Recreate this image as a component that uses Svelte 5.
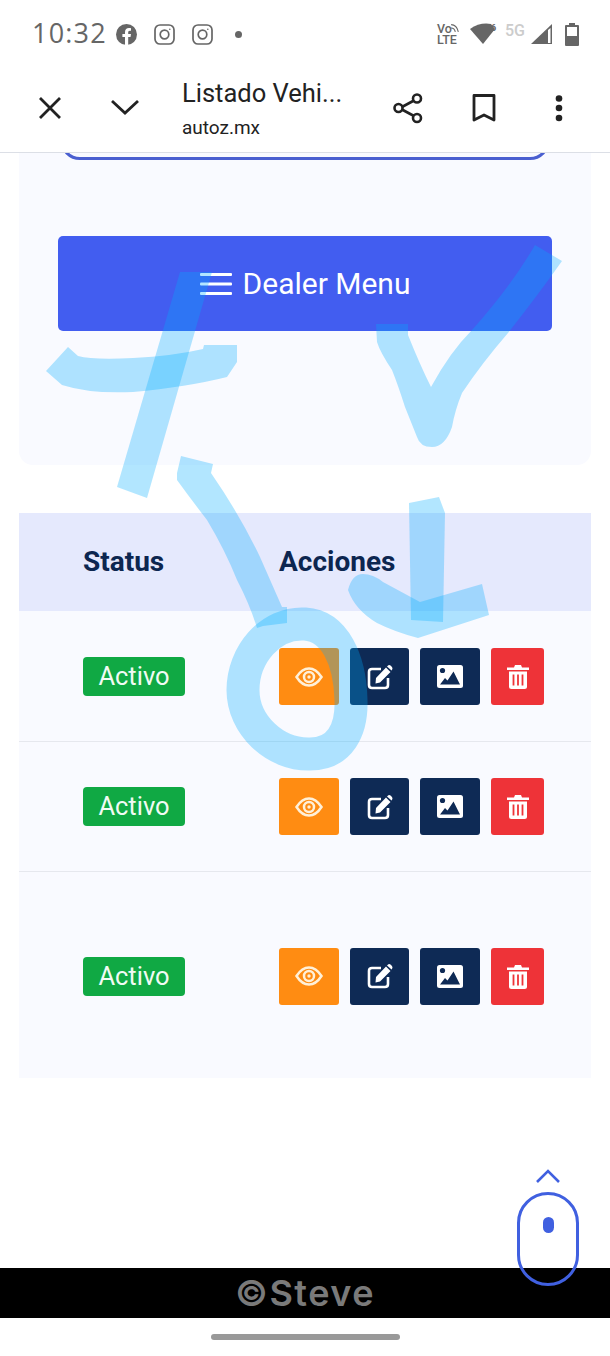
<script lang="ts">
  // Vehicle list as seen inside the in-app browser, with the hand-drawn marks on top
  const rows = [{ tall: false }, { tall: false }, { tall: true }]

  const strokes = [
    'M68 347 L78 356 Q93 360 133 358 Q173 356 203 349 L204 345 L237 345 L237 362 L227 377 Q187 387 133 392 Q90 394 62 385 L46 371 Z',
    'M180 272 L212 272 L147 498 L117 487 Z',
    'M376 324 L408 324 L408 335 Q420 365 431 387 Q450 352 472 330 Q512 285 535 245 L562 261 Q538 295 508 333 Q482 363 462 393 Q455 410 452 427 Q445 447 432 447 Q420 447 417 437 L405 407 Q398 385 392 370 Q380 352 377 342 Z',
    'M181 456 L213 464 L211 473 Q240 515 260 557 L282 607 L287 607 L287 623 L263 626 L257 628 Q250 605 237 580 Q225 550 207 520 Q190 498 177 480 L177 473 Z',
    'M409 503 L439 497 L445 513 L443 622 L411 620 Z',
    'M348 590 Q352 574 363 574 Q373 574 383 582 L420 602 L482 584 L489 615 L418 638 Q395 632 377 623 Q355 610 348 590 Z',
  ]
</script>

<div class="page">
  <div class="status-bar">
    <span class="time">10:32</span>
    <svg class="st-fb" width="21" height="21" viewBox="0 0 21 21">
      <circle cx="10.5" cy="10.5" r="10.5" fill="#666" />
      <path d="M9 21v-8H6.4v-3H9V8c0-2.700 1.600-4 4-4 1 0 2 .2 2 .2v2.500h-1.200c-1.200 0-1.600.8-1.600 1.500V10h2.800l-.5 3h-2.300v8z" fill="#fff" />
    </svg>
    <svg class="st-ig" width="21" height="21" viewBox="0 0 21 21" fill="none" stroke="#666" stroke-width="1.700">
      <rect x="1" y="1" width="19" height="19" rx="5" />
      <circle cx="10.500" cy="10.500" r="4.300" />
      <circle cx="15.800" cy="5.200" r=".8" fill="#666" stroke="none" />
    </svg>
    <svg class="st-ig" width="21" height="21" viewBox="0 0 21 21" fill="none" stroke="#666" stroke-width="1.700">
      <rect x="1" y="1" width="19" height="19" rx="5" />
      <circle cx="10.500" cy="10.500" r="4.300" />
      <circle cx="15.800" cy="5.200" r=".8" fill="#666" stroke="none" />
    </svg>
    <span class="st-dot"></span>

    <div class="st-right">
      <div class="volte">
        <span>Vo</span>
        <span>LTE</span>
        <svg width="10" height="10" viewBox="0 0 9 9" fill="none" stroke="#666" stroke-width="1">
          <path d="M1 1.500Q6 1.500 7.500 8M1 4.500Q4 4.500 4.800 8" />
        </svg>
      </div>
      <svg class="wifi" width="28" height="22" viewBox="0 0 28 22">
        <path d="M0 6 Q10 -1 21 1 L25 6 L13 21 Z" fill="#666" />
        <text x="21" y="8" font-size="9" font-weight="700" fill="#666" font-family="Roboto, sans-serif">6</text>
      </svg>
      <span class="fiveg">5G</span>
      <svg width="23" height="22" viewBox="0 0 23 22">
        <path d="M1 21 L22 1 V21 Z" fill="#666" />
        <path d="M18 7 L20.500 5 V20 H18 Z" fill="#fff" />
      </svg>
      <svg class="battery" width="14" height="23" viewBox="0 0 14 23">
        <path d="M4 0h6v2h3a1 1 0 0 1 1 1v19a1 1 0 0 1-1 1H1a1 1 0 0 1-1-1V3a1 1 0 0 1 1-1h3z" fill="#666" />
        <rect x="2" y="4" width="10" height="9" fill="#fff" />
      </svg>
    </div>
  </div>

  <header class="toolbar">
    <svg class="tb-icon" width="40" height="40" viewBox="0 0 40 40" fill="none" stroke="#222" stroke-width="2.800">
      <path d="M10 10 L30 30 M30 10 L10 30" />
    </svg>
    <svg class="tb-icon chevron" width="40" height="40" viewBox="0 0 40 40" fill="none" stroke="#222" stroke-width="2.800">
      <path d="M7 13 L20 25 L33 13" />
    </svg>
    <div class="tb-title">
      <div class="title">Listado Vehi...</div>
      <div class="url">autoz.mx</div>
    </div>
    <svg class="tb-icon" width="40" height="40" viewBox="0 0 40 40" fill="none" stroke="#222" stroke-width="2.600">
      <path d="M13 19.500 L26 12.500 M13 21 L26 28" />
      <circle cx="10.500" cy="20" r="4" fill="#fff" />
      <circle cx="29" cy="10.500" r="4" fill="#fff" />
      <circle cx="29" cy="30" r="4" fill="#fff" />
    </svg>
    <svg class="tb-icon gap" width="40" height="40" viewBox="0 0 40 40" fill="none" stroke="#222" stroke-width="2.800">
      <path d="M10 7.500 H30 V32 L20 27 L10 32 Z" stroke-linejoin="round" />
    </svg>
    <svg class="tb-icon gap" width="40" height="40" viewBox="0 0 40 40" fill="#222">
      <circle cx="20" cy="10.500" r="3.300" />
      <circle cx="20" cy="20" r="3.300" />
      <circle cx="20" cy="30" r="3.300" />
    </svg>
  </header>

  <main class="content">
    <section class="card">
      <div class="clipped-box"></div>
      <button class="dealer-btn">
        <svg width="32" height="24" viewBox="0 0 32 24" fill="#fff">
          <rect x="0" y="1" width="32" height="3" rx="1" />
          <rect x="0" y="10.500" width="32" height="3" rx="1" />
          <rect x="0" y="20" width="32" height="3" rx="1" />
        </svg>
        <span>Dealer Menu</span>
      </button>
    </section>

    <section class="table">
      <div class="row head">
        <div>Status</div>
        <div>Acciones</div>
      </div>
      {#each rows as row}
        <div class="row" class:tall={row.tall}>
          <div><span class="badge">Activo</span></div>
          <div class="actions">
            <button class="act orange" aria-label="Ver">
              <svg width="28" height="20" viewBox="0 0 28 20" fill="none" stroke="#fff0d8" stroke-width="2.500">
                <path d="M1.500 10 Q7 1.500 14 1.500 Q21 1.500 26.500 10 Q21 18.500 14 18.500 Q7 18.500 1.500 10 Z" />
                <circle cx="14" cy="10" r="5" />
                <circle cx="14" cy="10" r="1.700" fill="#fff0d8" stroke="none" />
              </svg>
            </button>
            <button class="act navy edit" aria-label="Editar">
              <svg width="26" height="26" viewBox="0 0 26 26">
                <path d="M14 5 H5 Q2 5 2 8 V21 Q2 24 5 24 H18 Q21 24 21 21 V14" fill="none" stroke="#fff" stroke-width="2.600" />
                <path d="M9 14 L19 3.500 L23.500 8 L13 18.500 L8.500 19.500 Z M20.500 2 Q22 .5 23.500 1.500 L25 3 Q26 4.500 25 6 L24.500 6.500 L20 2.500 Z" fill="#fff" />
              </svg>
            </button>
            <button class="act navy" aria-label="Imagen">
              <svg width="26" height="23" viewBox="0 0 26 23">
                <rect x="0" y="0" width="26" height="23" rx="2.500" fill="#fff" />
                <circle cx="5.500" cy="5.500" r="2.600" fill="#0e2a55" />
                <path d="M3 19.500 L8 13 L10.500 15.500 L16.500 6.500 L23 19.500 Z" fill="#0e2a55" />
              </svg>
            </button>
            <button class="act red" aria-label="Borrar">
              <svg width="22" height="25" viewBox="0 0 22 25">
                <path d="M0 3.500 H7 L8 1 H14 L15 3.500 H22 V6 H0 Z" fill="#fff" />
                <path d="M2 7.500 H20 V22.500 Q20 25 17.500 25 H4.500 Q2 25 2 22.500 Z" fill="#fff" />
                <path d="M6.500 10.500 V21.500 M11 10.500 V21.500 M15.500 10.500 V21.500" stroke="#ee3338" stroke-width="1.800" />
              </svg>
            </button>
          </div>
        </div>
      {/each}
    </section>
  </main>

  <footer class="brand">©Steve</footer>
  <div class="nav-area"><span class="nav-pill"></span></div>

  <!-- scroll hint floats over the footer -->
  <div class="scroll-hint">
    <svg width="26" height="16" viewBox="0 0 26 16" fill="none" stroke="#4060e0" stroke-width="2.600">
      <path d="M2 14 L13 3 L24 14" />
    </svg>
    <div class="mouse"><span class="wheel"></span></div>
  </div>

  <svg class="scribbles" width="610" height="1356" viewBox="0 0 610 1356">
    {#each strokes as d}
      <path {d} fill="#00acff" />
    {/each}
    <path
      d="M305 624 C270 622 243 655 243 690 C243 725 275 755 310 754 C340 754 352 730 351 700 C350 660 335 626 305 624 Z"
      fill="none"
      stroke="#00acff"
      stroke-width="33"
    />
  </svg>
</div>

<style>
  :global(body) {
    background: #fff;
  }

  .page {
    position: relative;
    width: 610px;
    height: 1356px;
    overflow: hidden;
    background: #fff;
    font-family: Roboto, sans-serif;
  }

  .status-bar {
    display: flex;
    align-items: center;
    height: 68px;
    padding: 0 31px 0 32px;
    box-sizing: border-box;
    color: #666;
  }

  .time {
    width: 84px;
    padding-bottom: 3px;
    font-family: 'Open Sans', sans-serif;
    font-size: 27px;
    letter-spacing: 1.200px;
  }

  .st-ig {
    margin-left: 17px;
  }

  .st-dot {
    width: 7px;
    height: 7px;
    margin-left: 22px;
    border-radius: 50%;
    background: #666;
  }

  .st-right {
    display: flex;
    align-items: center;
    margin-left: auto;
  }

  .volte {
    position: relative;
    display: flex;
    flex-direction: column;
    width: 21px;
    font-size: 12.500px;
    line-height: 11px;
    font-weight: 500;
  }

  .volte svg {
    position: absolute;
    top: 0;
    right: -2px;
  }

  .wifi {
    margin-left: 12px;
  }

  .fiveg {
    margin: -8px 5px 0 7px;
    color: #ccc;
    font-size: 16px;
    font-weight: 500;
  }

  .battery {
    margin-left: 12px;
  }

  .toolbar {
    position: relative;
    z-index: 1;
    display: flex;
    align-items: center;
    height: 80px;
    padding: 0 0 4px 30px;
    background: #fff;
    border-bottom: 1px solid #dcdfe6;
  }

  .tb-icon {
    flex: none;
  }

  .chevron {
    margin-left: 35px;
  }

  .tb-title {
    width: 206px;
    margin-left: 37px;
    color: #222;
  }

  .title {
    font-size: 25.500px;
    line-height: 32px;
  }

  .url {
    margin-top: 8px;
    font-size: 19px;
    line-height: 22px;
  }

  .gap {
    margin-left: 36px;
  }

  .gap:last-child {
    margin-left: 35px;
  }

  .content {
    height: 1115px;
    padding: 0 19px;
  }

  .card {
    display: flow-root;
    height: 312px;
    padding: 0 39px;
    background: #f9faff;
    border-radius: 0 0 14px 14px;
  }

  .clipped-box {
    box-sizing: border-box;
    height: 40px;
    margin: -33px 2px 0;
    border: 3px solid #4a5fd0;
    border-radius: 22px;
  }

  .dealer-btn {
    display: flex;
    align-items: center;
    justify-content: center;
    gap: 11px;
    width: 100%;
    height: 95px;
    margin-top: 76px;
    border: none;
    border-radius: 5px;
    background: #425df0;
    color: #fff;
    font-family: Roboto, sans-serif;
    font-size: 30px;
  }

  .table {
    margin-top: 48px;
    background: #f9faff;
  }

  .row {
    display: grid;
    grid-template-columns: 196px 1fr;
    align-items: center;
    height: 130px;
    padding-left: 64px;
    box-sizing: border-box;
  }

  .row + .row + .row {
    border-top: 1px solid #e6e8ee;
    padding-bottom: 1px;
  }

  .row.head {
    height: 98px;
    padding-bottom: 2px;
    background: #e5e9fd;
    color: #0c2650;
    font-size: 28px;
    font-weight: 700;
  }

  .row.tall {
    height: 207px;
    padding-top: 2px;
    padding-bottom: 0;
  }

  .badge {
    display: block;
    width: 102px;
    height: 39px;
    margin-top: 1px;
    border-radius: 4px;
    background: #10a944;
    color: #f2fbf4;
    font-size: 25.500px;
    line-height: 38px;
    text-align: center;
  }

  .actions {
    display: flex;
    gap: 11px;
    margin-top: 1px;
  }

  .act {
    display: flex;
    align-items: center;
    justify-content: center;
    width: 60px;
    height: 57px;
    padding: 0;
    border: none;
    border-radius: 3px;
  }

  .orange {
    background: #ff8c12;
  }

  .navy {
    background: #0e2a55;
  }

  .edit {
    width: 59px;
  }

  .red {
    width: 53px;
    background: #ee3338;
  }

  .brand {
    display: flex;
    align-items: center;
    justify-content: center;
    height: 50px;
    background: #000;
    color: #7a7a7a;
    font-family: Inter, sans-serif;
    font-size: 36px;
    font-weight: 600;
    letter-spacing: 1.500px;
  }

  .nav-area {
    display: flex;
    justify-content: center;
    height: 38px;
    padding-top: 16px;
    box-sizing: border-box;
  }

  .nav-pill {
    width: 189px;
    height: 6px;
    border-radius: 3px;
    background: #999;
  }

  .scroll-hint {
    position: absolute;
    left: 517px;
    top: 1168px;
    display: flex;
    flex-direction: column;
    align-items: center;
    gap: 8px;
    width: 62px;
  }

  .mouse {
    display: flex;
    justify-content: center;
    width: 62px;
    height: 94px;
    padding-top: 22px;
    box-sizing: border-box;
    border: 3px solid #4060e0;
    border-radius: 31px;
  }

  .wheel {
    width: 11px;
    height: 16px;
    border-radius: 6px;
    background: #4060e0;
  }

  .scribbles {
    position: absolute;
    inset: 0;
    pointer-events: none;
  }

  .scribbles path {
    opacity: 0.3;
  }
</style>
